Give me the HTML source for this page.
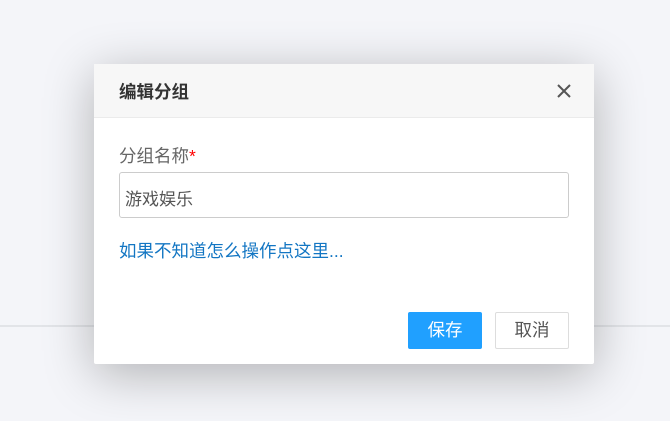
<!DOCTYPE html><html><head><meta charset="utf-8"><style>
body{margin:0;width:670px;height:421px;background:#f4f5f9;position:relative;overflow:hidden;font-family:"Liberation Sans","Noto Sans CJK SC",sans-serif}
.line{position:absolute;left:0;right:0;top:325px;height:2px;background:#e2e4e8}
.dlg{position:absolute;left:94px;top:64px;width:500px;height:300px;background:#fff;border-radius:2px;box-shadow:0 10px 50px rgba(0,0,0,.28)}
.hd{height:53px;background:#f7f7f7;border-bottom:1px solid #ebebeb;position:relative}
.t{position:absolute;left:25px;top:15px;font-size:17.5px;font-weight:bold;color:#333}
.x{position:absolute;left:462px;top:19px}
.lb{position:absolute;left:25px;top:79px;font-size:17.5px;color:#666}
.lb span{color:#f00}
.in{position:absolute;left:25px;top:108px;width:450px;height:46px;border:1px solid #ccc;border-radius:3px;box-sizing:border-box}
.in div{position:absolute;left:5px;top:12px;font-size:17px;color:#555}
.lk{position:absolute;left:25px;top:174px;font-size:17.5px;color:#1376c3}
.b{position:absolute;top:248px;width:74px;height:37px;box-sizing:border-box;border-radius:2px;font-size:17.5px;text-align:center;line-height:37px}
.s{left:314px;background:#20a0ff;color:#fff}
.c{left:401px;border:1px solid #ddd;color:#555;line-height:35px}
</style></head><body>
<div class="line"></div>
<div class="dlg">
<div class="hd"><div class="t">编辑分组</div>
<svg class="x" width="16" height="16" viewBox="0 0 16 16"><path d="M2 2L14 14M14 2L2 14" stroke="#555" stroke-width="2"/></svg></div>
<div class="lb">分组名称<span>*</span></div>
<div class="in"><div>游戏娱乐</div></div>
<div class="lk">如果不知道怎么操作点这里...</div>
<div class="b s">保存</div><div class="b c">取消</div>
</div>
</body></html>
